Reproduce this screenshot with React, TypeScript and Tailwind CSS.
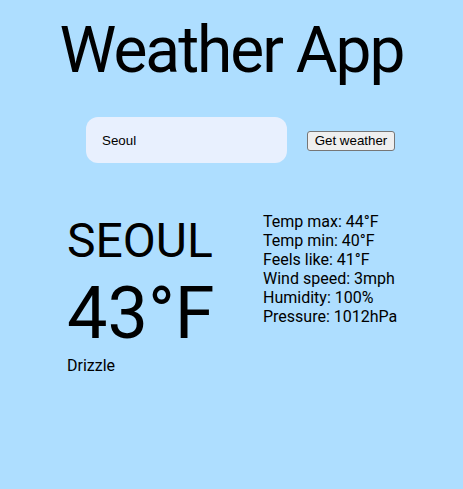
export default function App() {
  const stats = [
    "Temp max: 44°F",
    "Temp min: 40°F",
    "Feels like: 41°F",
    "Wind speed: 3mph",
    "Humidity: 100%",
    "Pressure: 1012hPa",
  ];

  return (
    <div className="min-h-[489px] bg-[#aedeff] font-['Roboto',sans-serif] text-black">
      <h1 className="pt-[13px] text-center text-[64px] leading-[normal] font-normal tracking-[-2px]">
        Weather App
      </h1>

      <form
        className="mt-[29px] ml-[86px] flex items-center gap-[20px]"
        onSubmit={(e) => e.preventDefault()}
      >
        <input
          defaultValue="Seoul"
          className="h-[46px] w-[201px] rounded-[12px] bg-[#e8f0fe] pl-[16px] font-['Liberation_Sans',Arial,sans-serif] text-[13.33px] outline-none"
        />
        <button
          type="submit"
          className="mt-[1px] h-[20px] w-[88px] rounded-[3px] border border-[#767676] bg-[#efefef] font-['Liberation_Sans',Arial,sans-serif] text-[13.33px] leading-none"
        >
          Get weather
        </button>
      </form>

      <div className="mt-[49px] ml-[67px] flex items-start">
        <div className="w-[196px]">
          <h2 className="text-[48px] leading-[normal] font-normal">SEOUL</h2>
          <p className="mt-[2px] text-[72px] leading-[normal]">43°F</p>
          <p className="text-[16px] leading-[normal]">Drizzle</p>
        </div>
        <ul className="text-[16px] leading-[19px]">
          {stats.map((s) => (
            <li key={s}>{s}</li>
          ))}
        </ul>
      </div>
    </div>
  );
}
